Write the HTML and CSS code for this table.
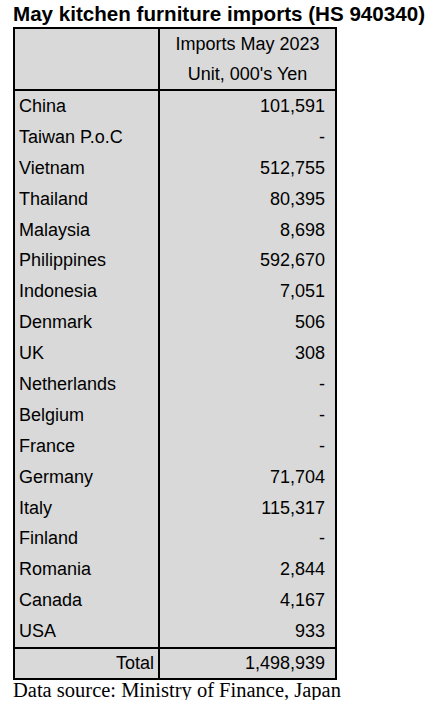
FILE: index.html
```html
<!DOCTYPE html>
<html>
<head>
<meta charset="utf-8">
<link rel="stylesheet" href="styles.css">
</head>
<body>
<div class="page">
  <h1 class="title">May kitchen furniture imports (HS 940340)</h1>
  <table class="tbl">
    <colgroup><col class="col1"><col class="col2"></colgroup>
    <thead>
      <tr>
        <th class="c1"></th>
        <th class="c2"><div>Imports May 2023</div><div>Unit, 000's Yen</div></th>
      </tr>
    </thead>
    <tbody>
      <tr><td class="c1">China</td><td class="c2">101,591</td></tr>
      <tr><td class="c1">Taiwan P.o.C</td><td class="c2">-</td></tr>
      <tr><td class="c1">Vietnam</td><td class="c2">512,755</td></tr>
      <tr><td class="c1">Thailand</td><td class="c2">80,395</td></tr>
      <tr><td class="c1">Malaysia</td><td class="c2">8,698</td></tr>
      <tr><td class="c1">Philippines</td><td class="c2">592,670</td></tr>
      <tr><td class="c1">Indonesia</td><td class="c2">7,051</td></tr>
      <tr><td class="c1">Denmark</td><td class="c2">506</td></tr>
      <tr><td class="c1">UK</td><td class="c2">308</td></tr>
      <tr><td class="c1">Netherlands</td><td class="c2">-</td></tr>
      <tr><td class="c1">Belgium</td><td class="c2">-</td></tr>
      <tr><td class="c1">France</td><td class="c2">-</td></tr>
      <tr><td class="c1">Germany</td><td class="c2">71,704</td></tr>
      <tr><td class="c1">Italy</td><td class="c2">115,317</td></tr>
      <tr><td class="c1">Finland</td><td class="c2">-</td></tr>
      <tr><td class="c1">Romania</td><td class="c2">2,844</td></tr>
      <tr><td class="c1">Canada</td><td class="c2">4,167</td></tr>
      <tr><td class="c1">USA</td><td class="c2">933</td></tr>
    </tbody>
    <tfoot>
      <tr><td class="c1 total">Total</td><td class="c2">1,498,939</td></tr>
    </tfoot>
  </table>
  <p class="source">Data source: Ministry of Finance, Japan</p>
</div>
</body>
</html>
```
FILE: styles.css
```css
html, body {
  margin: 0;
  padding: 0;
  background: #ffffff;
}
.page {
  padding: 2px 0 0 13px;
}
.title {
  margin: 0;
  font-family: "Liberation Sans", Arial, sans-serif;
  font-weight: bold;
  font-size: 20.6px;
  line-height: 24px;
  height: 25px;
  color: #000;
  white-space: nowrap;
}
.tbl {
  border-collapse: collapse;
  table-layout: fixed;
  width: 324px;
  font-family: "Liberation Sans", Arial, sans-serif;
  font-size: 18px;
  color: #000;
  background: #d9d9d9;
  border: 2px solid #000;
}
.col1 { width: 145px; }
.tbl th, .tbl td {
  padding: 0;
  font-weight: normal;
  white-space: nowrap;
}
.tbl .c1 {
  border-right: 2px solid #000;
  text-align: left;
  padding-left: 4px;
}
.tbl .c2 {
  text-align: right;
  padding-right: 10px;
}
.tbl thead th {
  height: 58px;
  border-bottom: 2px solid #000;
}
.tbl thead .c2 {
  text-align: center;
  padding-right: 0;
  line-height: 30px;
}
.tbl tbody td {
  height: 30.9px;
}
.tbl tfoot td {
  height: 29px;
  border-top: 2px solid #000;
}
.tbl .total {
  text-align: right;
  padding-right: 4px;
}
.source {
  margin: 0;
  font-family: "Liberation Serif", "Times New Roman", serif;
  font-size: 20.5px;
  line-height: 20px;
  color: #000;
}
```
